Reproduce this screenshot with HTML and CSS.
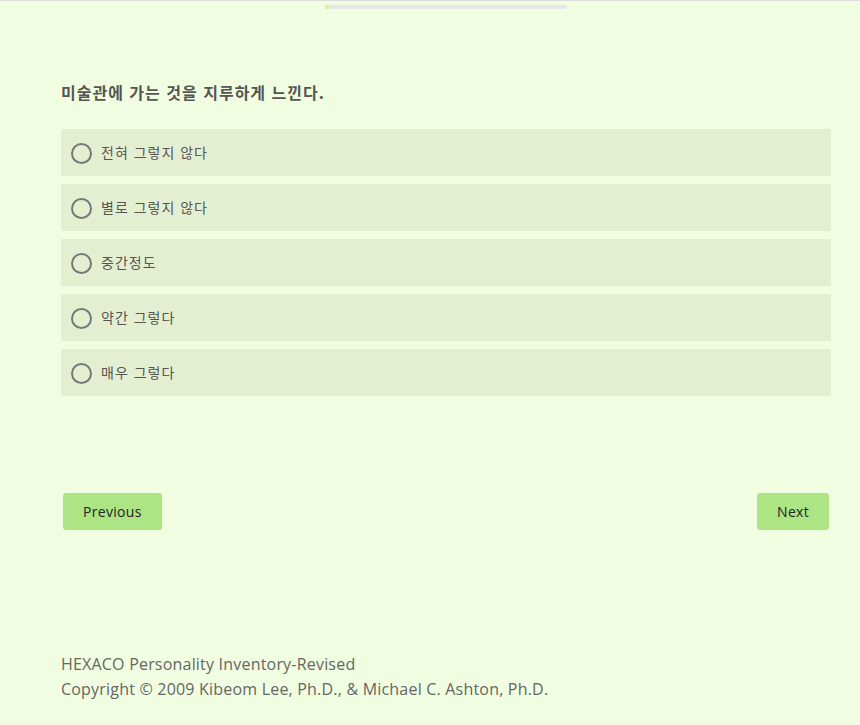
FILE: index.html
```html
<!DOCTYPE html>
<html lang="ko">
<head>
    <meta charset="UTF-8">
    <meta name="viewport" content="width=device-width, initial-scale=1.0">
    <title>HEXACO-PI-R</title>
    <link rel="stylesheet" href="styles.css">
</head>
<body>
    <div class="progress">
        <div class="progress-bar"><div class="progress-fill"></div></div>
    </div>

    <div class="container">
        <h2 class="question">미술관에 가는 것을 지루하게 느낀다.</h2>

        <div class="options">
            <label class="option"><input type="radio" name="q"><span class="radio"></span><span class="option-text">전혀 그렇지 않다</span></label>
            <label class="option"><input type="radio" name="q"><span class="radio"></span><span class="option-text">별로 그렇지 않다</span></label>
            <label class="option"><input type="radio" name="q"><span class="radio"></span><span class="option-text">중간정도</span></label>
            <label class="option"><input type="radio" name="q"><span class="radio"></span><span class="option-text">약간 그렇다</span></label>
            <label class="option"><input type="radio" name="q"><span class="radio"></span><span class="option-text">매우 그렇다</span></label>
        </div>

        <div class="nav">
            <a class="btn" href="#">Previous</a>
            <a class="btn" href="#">Next</a>
        </div>

        <div class="footer">
            <p>HEXACO Personality Inventory-Revised</p>
            <p>Copyright © 2009 Kibeom Lee, Ph.D., &amp; Michael C. Ashton, Ph.D.</p>
        </div>
    </div>
</body>
</html>
```

FILE: styles.css
```css
body {
    margin: 0;
    background-color: #f1fde0;
    font-family: "Open Sans", "Noto Sans CJK KR", sans-serif;
    color: #555;
    border-top: 1px solid #dcdcdc;
    min-height: 724px;
}

.progress {
    display: flex;
    justify-content: center;
    padding-top: 4px;
    padding-left: 32px;
}

.progress-bar {
    width: 242px;
    height: 4px;
    background-color: #e6e6e6;
    border-radius: 3px;
    overflow: hidden;
}

.progress-fill {
    width: 4px;
    height: 100%;
    background-color: #d2eea8;
}

.container {
    width: 770px;
    margin-left: 61px;
}

.question {
    font-family: "Noto Sans CJK KR", sans-serif;
    font-size: 16px;
    letter-spacing: 1px;
    font-weight: bold;
    color: #555;
    margin: 71px 0 25px;
    line-height: 24px;
}

.options {
    display: flex;
    flex-direction: column;
    gap: 8px;
}

.option {
    display: flex;
    align-items: center;
    height: 47px;
    background-color: #e4efd2;
    padding-left: 10px;
    box-sizing: border-box;
    cursor: pointer;
}

.option input {
    display: none;
}

.radio {
    width: 17px;
    height: 17px;
    border: 2px solid #777;
    border-radius: 50%;
    margin-right: 9px;
    margin-top: 2px;
}

.option-text {
    font-family: "Noto Sans CJK KR", sans-serif;
    font-size: 14px;
    letter-spacing: 1px;
    color: #555;
    margin-top: -2px;
}

.nav {
    display: flex;
    justify-content: space-between;
    margin: 97px 2px 0;
}

.btn {
    display: inline-block;
    background-color: #ade584;
    color: #222;
    font-size: 14px;
    letter-spacing: 0.3px;
    line-height: 37px;
    height: 37px;
    padding: 0 20px;
    border-radius: 3px;
    text-decoration: none;
}

.footer {
    margin-top: 123px;
    font-size: 16px;
    letter-spacing: 0.2px;
    color: #666;
}

.footer p {
    margin: 0 0 3px;
    line-height: 22px;
}
```
